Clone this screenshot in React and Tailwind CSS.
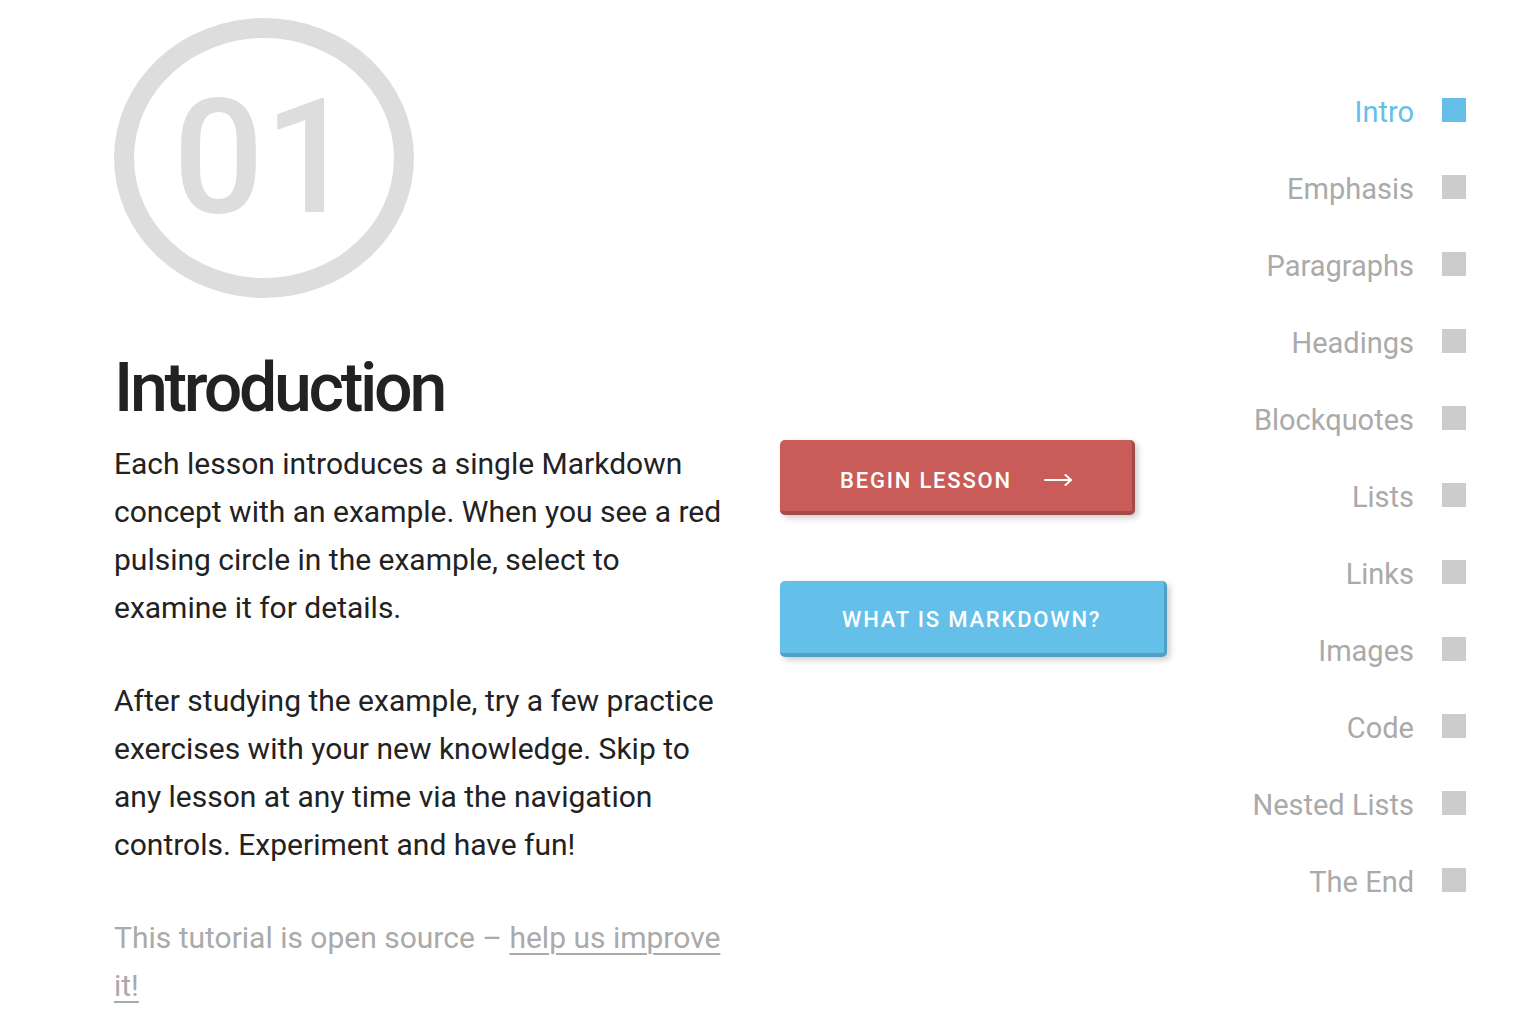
import React from "react";

const navItems = [
  "Intro",
  "Emphasis",
  "Paragraphs",
  "Headings",
  "Blockquotes",
  "Lists",
  "Links",
  "Images",
  "Code",
  "Nested Lists",
  "The End",
];

function Arrow() {
  return (
    <svg width="28" height="12" viewBox="0 0 28 12" fill="none" stroke="white" strokeWidth="2" strokeLinecap="round" strokeLinejoin="round">
      <line x1="1" y1="6" x2="27" y2="6" />
      <polyline points="21.5,1 27,6 21.5,11" />
    </svg>
  );
}

export default function App() {
  return (
    <div className="flex min-h-screen bg-white pt-[18px] pl-[114px] font-['Roboto','Liberation_Sans',sans-serif]">
      {/* Left column */}
      <div className="w-[620px] shrink-0">
        <div className="flex h-[280px] w-[300px] items-center justify-center rounded-[50%] border-[20px] border-[#dddddd]">
          <span className="text-[160px] font-medium leading-none text-[#dddddd]">01</span>
        </div>
        <h1 className="mt-[56px] text-[68px] font-medium leading-none tracking-[-3.3px] text-[#222222]">
          Introduction
        </h1>
        <p className="mt-[18px] text-[30px] leading-[48px] text-[#222222]">
          Each lesson introduces a single Markdown concept with an example. When you see a red pulsing circle in the example, select to examine it for details.
        </p>
        <p className="mt-[45px] text-[30px] leading-[48px] text-[#222222]">
          After studying the example, try a few practice exercises with your new knowledge. Skip to any lesson at any time via the navigation controls. Experiment and have fun!
        </p>
        <p className="mt-[45px] text-[30px] leading-[48px] text-[#aaaaaa]">
          This tutorial is open source – <a href="#" className="underline decoration-[2px] underline-offset-[5px]">help us improve it!</a>
        </p>
      </div>

      {/* Middle column: buttons */}
      <div className="ml-[46px] flex flex-col items-start pt-[422px]">
        <button className="flex h-[75px] items-center gap-[32px] rounded-[5px] border-b-[4px] border-r-[3px] border-[#a54a46] bg-[#c95c58] pl-[60px] pr-[60px] pt-[9px] text-[22px] font-medium tracking-[1.8px] text-white shadow-[3px_3px_6px_rgba(0,0,0,0.2)]">
          <span>BEGIN LESSON</span>
          <Arrow />
        </button>
        <button className="mt-[66px] flex h-[76px] items-center rounded-[5px] border-b-[4px] border-r-[3px] border-[#4f9fc6] bg-[#64bfe9] pl-[62px] pr-[63px] pt-[5px] text-[22px] font-medium tracking-[1.8px] text-white shadow-[3px_3px_6px_rgba(0,0,0,0.2)]">
          WHAT IS MARKDOWN?
        </button>
      </div>

      {/* Right nav */}
      <nav className="ml-auto flex flex-col items-end pr-[61px] pt-[56px]">
        {navItems.map((item, i) => (
          <div key={item} className="flex items-baseline">
            <span className={`text-[29px] leading-[77px] ${i === 0 ? "text-[#64bfe9]" : "text-[#aaaaaa]"}`}>{item}</span>
            <span className={`ml-[28px] mb-[2px] block h-[24px] w-[24px] ${i === 0 ? "bg-[#64bfe9]" : "bg-[#cccccc]"}`} />
          </div>
        ))}
      </nav>
    </div>
  );
}
